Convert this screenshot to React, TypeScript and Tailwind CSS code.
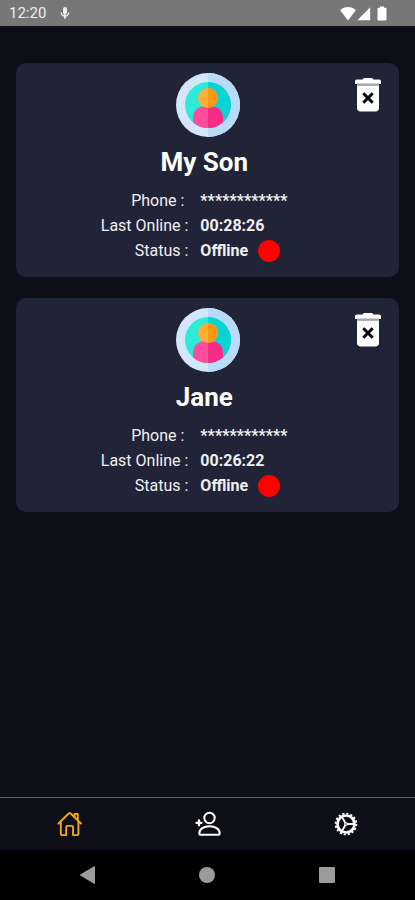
import { useState } from 'react';
import clsx from 'clsx';

type Child = {
  id: number;
  name: string;
  phone: string;
  lastOnline: string;
  online: boolean;
};

const initialChildren: Child[] = [
  { id: 1, name: 'My Son', phone: '************', lastOnline: '00:28:26', online: false },
  { id: 2, name: 'Jane', phone: '************', lastOnline: '00:26:22', online: false },
];

function StatusBar() {
  return (
    <div className="flex h-[26px] items-center justify-between bg-[#777777] pl-[9px] pr-7 text-[#eeeeee]">
      <div className="flex items-center gap-[14px]">
        <span className="text-[15px] leading-5">12:20</span>
        <svg className="h-3 w-[10px]" viewBox="0 0 10 12" fill="none" stroke="currentColor">
          <path d="M3 2a2 2 0 0 1 4 0v3.500a2 2 0 0 1-4 0z" fill="currentColor" stroke="none" />
          <path d="M1.300 5.500a3.700 3.700 0 1 0 7.400 0" strokeWidth="1.400" />
          <path d="M5 6v5.800" strokeWidth="1.600" />
        </svg>
      </div>
      <div className="flex items-center text-white">
        <svg className="h-[15px] w-4" viewBox="0 0 16 15" fill="currentColor">
          <path d="M8 14.500.2 4.200C4.500 0 11.500 0 15.800 4.200z" />
        </svg>
        <svg className="ml-px h-[15px] w-[14px]" viewBox="0 0 14 15" fill="currentColor">
          <path d="M13.200 1.200v13H.4z" />
        </svg>
        <svg className="ml-[6px] h-[15px] w-[10px]" viewBox="0 0 10 15" fill="currentColor">
          <path d="M3 .4h4v1.400h1.600c.5 0 .9.4.9.9v10.800c0 .5-.4.900-.9.900H1.400a.9.9 0 0 1-.9-.9V2.700c0-.5.4-.9.9-.9H3z" />
        </svg>
      </div>
    </div>
  );
}

function Avatar() {
  return (
    <svg className="size-16" viewBox="0 0 64 64" aria-hidden="true">
      <circle cx="32" cy="32" r="32" fill="#d3e7fa" />
      <path d="M32 0a32 32 0 0 1 0 64z" fill="#b9dbf8" />
      <circle cx="32" cy="32" r="23" fill="#30ead9" />
      <path d="M32 9a23 23 0 0 1 0 46z" fill="#0bd3d3" />
      <path d="M17 49.500V45c0-7 4.500-11.500 11-11.500h4V55a23 23 0 0 1-15-5.500z" fill="#ff4c9b" />
      <path d="M47 49.500V45c0-7-4.500-11.500-11-11.500h-4V55a23 23 0 0 0 15-5.500z" fill="#f72c85" />
      <circle cx="32" cy="25" r="10" fill="#ffae38" />
      <path d="M32 15a10 10 0 0 1 0 20z" fill="#fb9819" />
    </svg>
  );
}

function TrashIcon() {
  return (
    <svg className="h-[34px] w-[26px]" viewBox="0 0 26 34" aria-hidden="true">
      <path d="M8.800 0h8.400l1.300 1.500H24c1.200 0 2 .8 2 2V6H0V3.500c0-1.200.8-2 2-2h5.500z" fill="#fff" />
      <path d="M2 5.500h22v2H2z" fill="#a4a5ad" />
      <path d="M2 7.500h22V30c0 2-1.500 3.500-3.500 3.500h-15C3.500 33.500 2 32 2 30z" fill="#fff" />
      <path d="m8.300 15.300 9.400 9.400m0-9.400-9.400 9.400" stroke="#080911" strokeWidth="3" />
    </svg>
  );
}

function HomeIcon() {
  return (
    <svg className="size-[26px]" viewBox="0 0 26 26" fill="none" stroke="currentColor" strokeWidth="1.900" strokeLinecap="round" strokeLinejoin="round" aria-hidden="true">
      <path d="M2.500 12.500 12.700 2.500c.6-.5 1.400-.5 2 0l10.300 10" />
      <path d="M4.800 10.500v12.600c0 .6.4 1 1 1h4.400v-8c0-.7.5-1.200 1.200-1.200h4.400c.7 0 1.200.5 1.200 1.200v8h4.400c.6 0 1-.4 1-1V10.500" />
      <path d="M21.800 9V3h-3.300v2.800" />
    </svg>
  );
}

function AddPersonIcon() {
  return (
    <svg className="size-[26px] overflow-visible" viewBox="0 0 26 26" fill="none" stroke="currentColor" strokeWidth="2" strokeLinecap="round" strokeLinejoin="round" aria-hidden="true">
      <circle cx="15.500" cy="7" r="5.200" />
      <path d="M5.300 22.500c0-4.500 4.500-7.300 10.200-7.300s10.200 2.800 10.200 7.300c0 .8-.5 1.300-1.300 1.300H6.600c-.8 0-1.300-.5-1.300-1.300z" />
      <path d="M2.500 11.800h5M5 9.300v5" strokeWidth="2.300" />
    </svg>
  );
}

function CogIcon() {
  return (
    <svg className="size-[26px]" viewBox="0 0 26 26" fill="none" stroke="currentColor" aria-hidden="true">
      <circle cx="13" cy="13" r="10.400" strokeWidth="1.800" strokeDasharray="2.200 1.884" />
      <circle cx="13" cy="13" r="8.500" strokeWidth="2.700" />
      <path d="M13 13h8M13 13 9.200 6.400M13 13l-3.800 6.600" strokeWidth="1.900" />
      <circle cx="13" cy="13" r="1.800" fill="currentColor" stroke="none" />
      <circle cx="13" cy="13" r="0.700" fill="#0e0e18" stroke="none" />
    </svg>
  );
}

function ChildCard({ child, onDelete }: { child: Child; onDelete: () => void }) {
  return (
    <article className="relative rounded-[10px] bg-[#212436] pt-[10px] pb-[14px]">
      <button type="button" aria-label={`Delete ${child.name}`} onClick={onDelete} className="absolute top-[15px] right-[18px] cursor-pointer">
        <TrashIcon />
      </button>
      <div className="flex flex-col items-center">
        <Avatar />
        <h2 className="text-[26px] leading-[51px] font-bold whitespace-pre text-white">{`${child.name} `}</h2>
      </div>
      <dl className="grid grid-cols-[45%_1fr] gap-x-3 text-base leading-[25px] text-[#f0f0f2]">
        <dt className="text-right whitespace-pre">{'Phone : '}</dt>
        <dd className="font-bold">{child.phone}</dd>
        <dt className="text-right">Last Online :</dt>
        <dd className="font-bold">{child.lastOnline}</dd>
        <dt className="text-right">Status :</dt>
        <dd className="flex items-center gap-[10px] font-bold">
          {child.online ? 'Online' : 'Offline'}
          <span className={clsx('size-[22px] rounded-full', child.online ? 'bg-green-500' : 'bg-[#ff0000]')} />
        </dd>
      </dl>
    </article>
  );
}

const tabs = [
  { id: 'home', label: 'Home', Icon: HomeIcon },
  { id: 'add', label: 'Add child', Icon: AddPersonIcon },
  { id: 'settings', label: 'Settings', Icon: CogIcon },
];

export default function App() {
  const [children, setChildren] = useState(initialChildren);
  const [activeTab, setActiveTab] = useState('home');

  const removeChild = (id: number) => {
    setChildren((list) => list.filter((c) => c.id !== id));
  };

  return (
    <div className="flex min-h-screen flex-col bg-[#0e0e18] font-[Roboto,sans-serif]">
      <StatusBar />

      <main className="flex flex-1 flex-col gap-[21px] px-4 pt-[37px] pb-5">
        {children.map((child) => (
          <ChildCard key={child.id} child={child} onDelete={() => removeChild(child.id)} />
        ))}
      </main>

      {/* App tabs */}
      <nav className="grid h-[53px] grid-cols-3 border-t border-[#62626c] bg-[#0e0e18]">
        {tabs.map(({ id, label, Icon }) => (
          <button
            key={id}
            type="button"
            aria-label={label}
            onClick={() => setActiveTab(id)}
            className={clsx('flex cursor-pointer items-center justify-center', activeTab === id ? 'text-[#f0a41c]' : 'text-white')}
          >
            <Icon />
          </button>
        ))}
      </nav>

      {/* System navigation */}
      <div className="grid h-[50px] grid-cols-3 bg-black px-7 text-[#9b9b9b]">
        <button type="button" aria-label="Back" className="flex items-center justify-center">
          <svg className="size-[18px]" viewBox="0 0 18 18" fill="currentColor">
            <path d="M16 .8v16.400c0 .5-.5.700-.9.500L1.300 9.500a.6.6 0 0 1 0-1L15.100.3c.4-.2.9 0 .9.5z" />
          </svg>
        </button>
        <button type="button" aria-label="Home screen" className="flex items-center justify-center">
          <span className="size-4 rounded-full bg-[#9b9b9b]" />
        </button>
        <button type="button" aria-label="Recent apps" className="flex items-center justify-center">
          <span className="size-4 rounded-[1px] bg-[#9b9b9b]" />
        </button>
      </div>
    </div>
  );
}
